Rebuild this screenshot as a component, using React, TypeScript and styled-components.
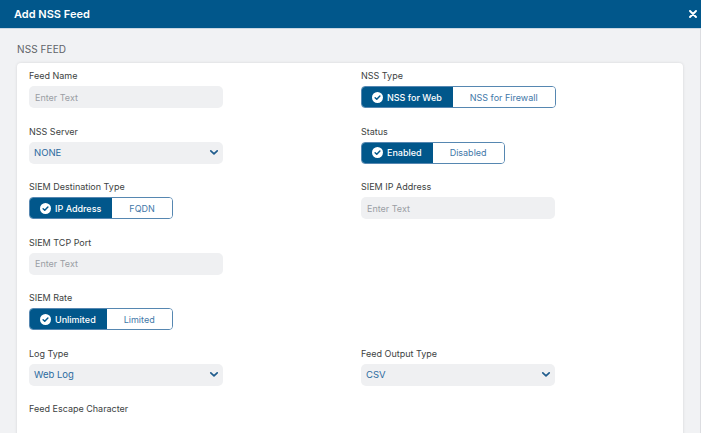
import React from 'react';
import styled, { createGlobalStyle } from 'styled-components';

const GlobalStyle = createGlobalStyle`
  html, body {
    margin: 0;
    padding: 0;
    overflow: hidden;
  }
  body {
    font-family: Inter, 'Noto Sans', 'Liberation Sans', sans-serif;
  }
`;

const Modal = styled.div`
  width: 701px;
  height: 433px;
  display: flex;
  flex-direction: column;
  background-color: #f1f2f4;
  overflow: hidden;
`;

const Header = styled.div`
  height: 28px;
  flex-shrink: 0;
  display: flex;
  align-items: center;
  justify-content: space-between;
  padding: 0 4px 0 14px;
  background-color: #01578b;
  border-bottom: 1px solid #c9d7e3;
`;

const Title = styled.h1`
  margin: 0;
  font-size: 11px;
  font-weight: 600;
  color: #ffffff;
`;

const CloseButton = styled.button`
  display: flex;
  align-items: center;
  justify-content: center;
  width: 9px;
  height: 9px;
  padding: 0;
  border: none;
  background: transparent;
  cursor: pointer;
`;

const Body = styled.div`
  flex: 1;
  padding: 14px 17px 0 17px;
  border-right: 1px solid #dcdde1;
`;

const SectionTitle = styled.div`
  font-size: 10px;
  color: #5f6368;
  letter-spacing: 0.1px;
  line-height: 12px;
  margin-bottom: 8px;
`;

const Card = styled.div`
  background-color: #ffffff;
  border-radius: 4px;
  box-shadow: 0 0 3px rgba(0, 0, 0, 0.12);
  padding: 7px 12px 20px;
  display: grid;
  grid-template-columns: 332px 1fr;
  row-gap: 17.5px;
`;

const Field = styled.div`
  display: flex;
  flex-direction: column;
  gap: 4px;
`;

const Label = styled.label`
  font-size: 9px;
  line-height: 12px;
  color: #3d3f42;
`;

const TextInput = styled.input<{ $plain?: boolean }>`
  box-sizing: border-box;
  width: 194px;
  height: 22px;
  border: none;
  border-radius: 5px;
  background-color: ${(p) => (p.$plain ? 'transparent' : '#eff0f2')};
  padding: 0 6px;
  font-family: inherit;
  font-size: 9px;
  color: #333;
  outline: none;
  &::placeholder {
    color: #9a9ea4;
  }
`;

const Select = styled.div`
  box-sizing: border-box;
  width: 194px;
  height: 22px;
  border-radius: 5px;
  background-color: #eff0f2;
  padding: 0 4px 0 5px;
  display: flex;
  align-items: center;
  justify-content: space-between;
  font-size: 9.5px;
  color: #2c6b9f;
  cursor: pointer;
`;

const Toggle = styled.div`
  display: inline-flex;
  align-self: flex-start;
  height: 22px;
  box-sizing: border-box;
  border: 1px solid #5687b1;
  border-radius: 4px;
  overflow: hidden;
`;

const Segment = styled.button<{ $active?: boolean }>`
  display: flex;
  align-items: center;
  gap: 4px;
  height: 100%;
  border: none;
  margin: 0;
  padding: ${(p) => (p.$active ? '0 11px 0 10px' : '0 17px')};
  font-family: inherit;
  font-size: 9px;
  font-weight: ${(p) => (p.$active ? 500 : 400)};
  color: ${(p) => (p.$active ? '#ffffff' : '#3f78a8')};
  background-color: ${(p) => (p.$active ? '#01578b' : '#ffffff')};
  cursor: pointer;
`;

const CheckIcon = () => (
  <svg width="11" height="11" viewBox="0 0 12 12">
    <circle cx="6" cy="6" r="6" fill="#ffffff" />
    <path d="M3.4 6.2 L5.2 7.9 L8.6 4.4" fill="none" stroke="#01578b" strokeWidth="1.6" strokeLinecap="round" strokeLinejoin="round" />
  </svg>
);

const Chevron = () => (
  <svg width="10" height="7" viewBox="0 0 10 7">
    <path d="M1.8 1.8 L5 4.8 L8.2 1.8" fill="none" stroke="#1f5c8d" strokeWidth="1.7" strokeLinecap="round" strokeLinejoin="round" />
  </svg>
);

const CloseIcon = () => (
  <svg width="8" height="8" viewBox="0 0 8 8">
    <path d="M1 1 L7 7 M7 1 L1 7" stroke="#ffffff" strokeWidth="1.9" strokeLinecap="round" />
  </svg>
);

interface ToggleFieldProps {
  label: string;
  options: string[];
  active: number;
}

const ToggleField: React.FC<ToggleFieldProps> = ({ label, options, active }) => (
  <Field>
    <Label>{label}</Label>
    <Toggle>
      {options.map((opt, i) => (
        <Segment key={opt} $active={i === active}>
          {i === active && <CheckIcon />}
          {opt}
        </Segment>
      ))}
    </Toggle>
  </Field>
);

const InputField: React.FC<{ label: string; plain?: boolean }> = ({ label, plain }) => (
  <Field>
    <Label>{label}</Label>
    <TextInput $plain={plain} placeholder={plain ? '' : 'Enter Text'} />
  </Field>
);

const SelectField: React.FC<{ label: string; value: string }> = ({ label, value }) => (
  <Field>
    <Label>{label}</Label>
    <Select>
      <span>{value}</span>
      <Chevron />
    </Select>
  </Field>
);

const Empty = styled.div``;

export default function App() {
  return (
    <Modal>
      <GlobalStyle />
      <Header>
        <Title>Add NSS Feed</Title>
        <CloseButton>
          <CloseIcon />
        </CloseButton>
      </Header>
      <Body>
        <SectionTitle>NSS FEED</SectionTitle>
        <Card>
          <InputField label="Feed Name" />
          <ToggleField label="NSS Type" options={['NSS for Web', 'NSS for Firewall']} active={0} />

          <SelectField label="NSS Server" value="NONE" />
          <ToggleField label="Status" options={['Enabled', 'Disabled']} active={0} />

          <ToggleField label="SIEM Destination Type" options={['IP Address', 'FQDN']} active={0} />
          <InputField label="SIEM IP Address" />

          <InputField label="SIEM TCP Port" />
          <Empty />

          <ToggleField label="SIEM Rate" options={['Unlimited', 'Limited']} active={0} />
          <Empty />

          <SelectField label="Log Type" value="Web Log" />
          <SelectField label="Feed Output Type" value="CSV" />

          <InputField label="Feed Escape Character" plain />
          <Empty />
        </Card>
      </Body>
    </Modal>
  );
}
